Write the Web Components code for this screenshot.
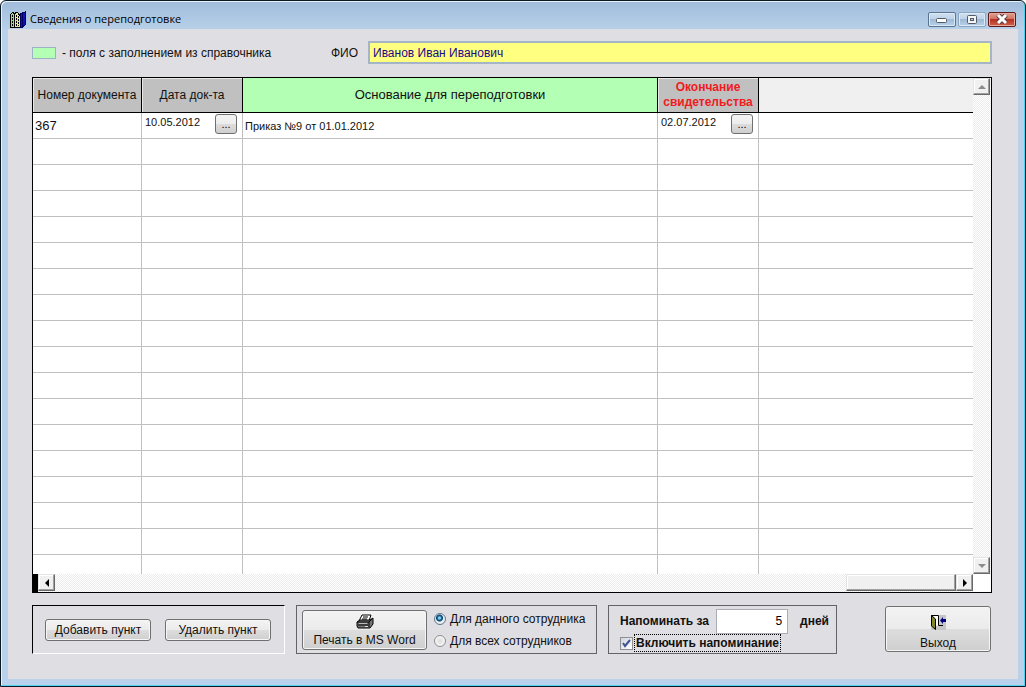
<!DOCTYPE html>
<html lang="ru">
<head>
<meta charset="utf-8">
<title>Сведения о переподготовке</title>
<style>
  body { margin: 0; font-family: "Liberation Sans", Arial, sans-serif; font-size: 12px; line-height: 16px; color: #111; }
</style>
</head>
<body>
<app-window>
  <span slot="title">Сведения о переподготовке</span>
  <employee-header></employee-header>
  <record-grid></record-grid>
  <action-bar></action-bar>
</app-window>

<template id="tpl-window">
  <style>
    :host { display: flex; flex-direction: column; box-sizing: border-box; height: 100vh; min-height: 400px; border: 1px solid #0b1a22; border-radius: 6px 6px 0 0; overflow: hidden; background: linear-gradient(#a0bcdb, #b9d1ea 30px, #b9d1ea); box-shadow: inset -1px -1px #4fd3ef, inset 1px 1px #e8f2fb; padding: 0 7px 7px; }
    header { display: flex; align-items: center; height: 28px; flex: none; padding: 8px 2px 0 1px; box-sizing: border-box; gap: 4px; }
    h1 { margin: 0; flex: 1; font: 11px/16px "Open Sans", "Noto Sans", sans-serif; color: #000; }
    .logo { width: 17px; height: 17px; }
    .controls { display: flex; gap: 2px; }
    .controls button { width: 28px; height: 15px; padding: 0; display: grid; place-items: center; border: 1px solid #5a7591; border-radius: 2px; background: linear-gradient(#cfdff0, #bdd2e8 50%, #9fbad6 50%, #b9d2ea); box-shadow: inset 0 0 0 1px #dce9f5; }
    .controls .min { padding-top: 4px; }
    .controls .max { border-color: #8ba7c4; }
    .controls .close { border-color: #5c1a1a; background: linear-gradient(#e0a090, #cf6f5e 50%, #b53220 50%, #cf6148); box-shadow: inset 0 0 0 1px #e7a99c; }
    main { flex: 1; min-height: 0; display: flex; flex-direction: column; background: #dfdee3; padding: 12px 26px 25px 24px; }
  </style>
  <header>
    <svg class="logo" viewBox="0 0 17 17" shape-rendering="crispEdges">
      <path d="M1 5 2 3 4 1 5 3V16H1Z" fill="#8fe08b" stroke="#000"/>
      <path d="M5 4 7 1 9 2 11 5V16H5Z" fill="#e4e49b" stroke="#000"/>
      <path d="M3 4V15M7 4V15M9 5V15" stroke="#000" stroke-dasharray="2 1"/>
      <path d="M11 3 13 2V16H11ZM13 2 16 1V14L13 16Z" fill="#1212b0" stroke="#000060"/>
    </svg>
    <h1><slot name="title"></slot></h1>
    <div class="controls">
      <button class="min" aria-label="Свернуть"><svg width="12" height="6" viewBox="0 0 12 6"><rect x=".5" y=".5" width="10" height="4" rx="1" fill="#fff" stroke="#535b68"/></svg></button>
      <button class="max" aria-label="Развернуть"><svg width="11" height="9" viewBox="0 0 11 9"><rect x=".5" y=".5" width="9" height="8" rx="1" fill="#f4f4f4" stroke="#535b68"/><rect x="3.500" y="3.500" width="3" height="2" fill="#b9cde2" stroke="#535b68"/></svg></button>
      <button class="close" aria-label="Закрыть"><svg width="12" height="10" viewBox="0 0 12 10"><path d="M2 1 10 9M10 1 2 9" stroke="#5a3b40" stroke-width="5"/><path d="M2 1 10 9M10 1 2 9" stroke="#fff" stroke-width="3"/></svg></button>
    </div>
  </header>
  <main><slot></slot></main>
</template>

<template id="tpl-employee">
  <style>
    :host { display: flex; align-items: center; flex: none; height: 23px; margin-bottom: 13px; }
    .swatch { width: 22px; height: 10px; border: 1px solid #9db2c4; background: #b3ffb3; margin-right: 6px; }
    .note { width: 269px; }
    label { width: 37px; }
    input { flex: 1; min-width: 0; height: 23px; box-sizing: border-box; border: 1px solid #a3b5c6; outline: 1px solid #a3b5c6; outline-offset: -2px; background: #ffff80; color: #1a0a8c; font: inherit; padding: 0 4px; }
  </style>
  <span class="swatch"></span>
  <span class="note">- поля с заполнением из справочника</span>
  <label for="fio">ФИО</label>
  <input id="fio" type="text" value="Иванов Иван Иванович">
</template>

<template id="tpl-grid">
  <style>
    :host { display: grid; grid-template: minmax(0, 1fr) 18px / minmax(0, 1fr) 18px; flex: 1; min-height: 0; border: 1px solid #000; background: #fff; margin-bottom: 12px; }
    .view { overflow: hidden; }
    table { width: 100%; table-layout: fixed; border-collapse: separate; border-spacing: 0; }
    .num { width: 109px; } .date { width: 101px; } .base { width: 415px; }
    th { height: 35px; box-sizing: border-box; padding: 0; font-weight: normal; border-right: 1px solid #000; border-bottom: 1px solid #000; background: #c0c0c0; box-shadow: inset 1px 1px #e8e8e8; white-space: nowrap; }
    th.green { background: #b3ffb3; box-shadow: none; font-size: 13px; }
    th.red { color: #f11a1e; font-weight: bold; line-height: 15px; }
    th.rest { background: #f0f0f0; border-right: 0; box-shadow: none; }
    td { height: 26px; box-sizing: border-box; padding: 0 2px; border-right: 1px solid #c0c0c0; border-bottom: 1px solid #c0c0c0; white-space: nowrap; font-size: 13px; }
    td:last-child { border-right: 0; }
    td.small { font-size: 11px; }
    td.picker { padding: 0; }
    .cell { display: flex; justify-content: space-between; height: 25px; padding: 1px 5px 0 3px; box-sizing: border-box; }
    .cell button { width: 22px; height: 20px; padding: 0; border: 1px solid #707070; border-radius: 3px; background: linear-gradient(#f4f4f4, #ececec 50%, #dddddd 50%, #cfcfcf); font: inherit; }
    .track { background: conic-gradient(#fff 25%, #ececec 0 50%, #fff 0 75%, #ececec 0) 0 0 / 2px 2px; display: flex; justify-content: space-between; }
    .v { flex-direction: column; }
    .track button, .thumb { box-sizing: border-box; padding: 0; border: 1px solid; border-color: #e3e3e3 #696969 #696969 #e3e3e3; box-shadow: inset -1px -1px #a0a0a0, inset 1px 1px #fff; background: #f0f0f0; display: grid; place-items: center; width: 17px; height: 17px; }
    .h .split { width: 5px; background: #000; }
    .h .thumb { width: 110px; margin-left: auto; }
  </style>
  <div class="view">
    <table>
      <colgroup><col class="num"><col class="date"><col class="base"><col class="date"><col></colgroup>
      <thead><tr><th>Номер документа</th><th>Дата док-та</th><th class="green">Основание для переподготовки</th><th class="red">Окончание<br>свидетельства</th><th class="rest"></th></tr></thead>
      <tbody>
        <tr><td>367</td><td class="picker small"><div class="cell"><span>10.05.2012</span><button aria-label="Выбрать дату документа">...</button></div></td><td class="small">Приказ №9 от 01.01.2012</td><td class="picker small"><div class="cell"><span>02.07.2012</span><button aria-label="Выбрать дату окончания">...</button></div></td><td></td></tr>
      </tbody>
    </table>
  </div>
  <div class="track v">
    <button aria-label="Вверх"><svg width="8" height="4"><path d="M0 4 4 0 8 4Z" fill="#8c8c8c"/></svg></button>
    <button aria-label="Вниз"><svg width="8" height="4"><path d="M0 0H8L4 4Z" fill="#8c8c8c"/></svg></button>
  </div>
  <div class="track h">
    <span class="split"></span>
    <button aria-label="Влево"><svg width="4" height="8"><path d="M4 0V8L0 4Z" fill="#000"/></svg></button>
    <span class="thumb"></span>
    <button aria-label="Вправо"><svg width="4" height="8"><path d="M0 0V8L4 4Z" fill="#000"/></svg></button>
  </div>
</template>

<template id="tpl-button">
  <style>
    :host { display: block; flex: none; width: 106px; height: 22px; }
    :host([size="print"]) { width: 125px; height: 40px; }
    :host([size="exit"]) { width: 106px; height: 46px; }
    button { width: 100%; height: 100%; box-sizing: border-box; padding: 0; display: flex; flex-direction: column; align-items: center; justify-content: center; gap: 3px; border: 1px solid #707070; border-radius: 3px; background: linear-gradient(#f3f3f3, #ebebeb 50%, #dddddd 50%, #cfcfcf); box-shadow: inset 0 0 0 1px #f6f6f6; font: inherit; color: inherit; white-space: nowrap; }
    :host([size="print"]) button { padding-top: 2px; }
    :host([size="exit"]) button { gap: 5px; padding-top: 8px; }
    ::slotted(svg) { display: block; }
  </style>
  <button><slot name="icon"></slot><span><slot></slot></span></button>
</template>

<template id="tpl-panel">
  <style>
    :host { display: flex; align-items: center; box-sizing: border-box; flex: none; height: 49px; border: 1px solid #646468; }
    :host([sunken]) { border-color: #000 #fff #fff #000; }
  </style>
  <slot></slot>
</template>

<template id="tpl-actions">
  <style>
    :host { display: flex; flex: none; gap: 11px; align-items: flex-start; }
    .edit { width: 253px; gap: 14px; padding: 0 12px; }
    .print { width: 301px; padding: 0 5px; gap: 7px; }
    .radios { display: grid; gap: 6px; }
    .radios label { display: flex; align-items: center; gap: 4px; white-space: nowrap; }
    input[type=radio] { appearance: none; margin: 0; width: 12px; height: 12px; border: 1px solid #8e8f8f; border-radius: 50%; box-sizing: border-box; background: radial-gradient(#dcdcdc, #f6f6f6 70%); }
    input[type=radio]:checked { border-color: #5c7689; background: radial-gradient(circle at 45% 40%, #7fd4f4 0 1px, #1b6c9f 2px, #0b3f66 3px, #e8eef2 4px); }
    .remind { width: 229px; font-weight: bold; padding: 0 7px 0 11px; }
    .stack { display: grid; flex: 1; padding-top: 2px; }
    .line { display: flex; align-items: center; height: 25px; }
    .line label { flex: 1; }
    .days { width: 72px; height: 25px; box-sizing: border-box; border: 1px solid #aaadb3; background: #fff; font: 12px "Liberation Sans", Arial, sans-serif; text-align: right; padding: 0 5px; margin-right: 12px; }
    .check { display: flex; align-items: center; height: 19px; gap: 1px; }
    .check label { border: 1px dotted #000; height: 18px; box-sizing: border-box; padding: 0 1px; line-height: 16px; }
    .check input { appearance: none; margin: 0; width: 13px; height: 13px; border: 1px solid #8e8f8f; box-sizing: border-box; background: linear-gradient(135deg, #cdd5e0, #fff); }
    .box { display: grid; place-items: center; }
    .box > * { grid-area: 1 / 1; }
    .box svg { pointer-events: none; }
    .exit { margin: 1px 1px 0 auto; }
  </style>
  <group-panel class="edit" sunken>
    <push-button>Добавить пункт</push-button>
    <push-button>Удалить пункт</push-button>
  </group-panel>
  <group-panel class="print">
    <push-button size="print">
      <svg slot="icon" width="18" height="15" viewBox="0 0 18 15">
        <path d="M6 1H15L13 7H3Z" fill="#fff" stroke="#000"/>
        <path d="M7 3H12M6 5H11" stroke="#000"/>
        <path d="M1 8 4 6H14L17 4V10L14 14H2L1 12Z" fill="#777" stroke="#000"/>
        <path d="M1 8H13L16 5M13 8V13M2 11H12" fill="none" stroke="#000"/>
        <path d="M3 9.500H11" stroke="#bbb"/><path d="M9 12.500H12" stroke="#ddd"/>
      </svg>Печать в MS Word</push-button>
    <div class="radios">
      <label><input type="radio" name="scope" checked>Для данного сотрудника</label>
      <label><input type="radio" name="scope">Для всех сотрудников</label>
    </div>
  </group-panel>
  <group-panel class="remind">
    <div class="stack">
      <div class="line"><label for="days">Напоминать за</label><input class="days" id="days" type="text" value="5"><span>дней</span></div>
      <div class="check"><span class="box"><input id="on" type="checkbox" checked><svg width="13" height="13"><path d="M3 6 5 9 10 3" fill="none" stroke="#40538f" stroke-width="2"/></svg></span><label for="on">Включить напоминание</label></div>
    </div>
  </group-panel>
  <push-button class="exit" size="exit">
    <svg slot="icon" width="17" height="15" viewBox="0 0 17 15">
      <rect x="1" width="15" height="15" fill="#c6c6c6"/>
      <path d="M1.500 11V.5H8.500V10.500H13" fill="#fff" stroke="#000"/>
      <path d="M1.500.5 5.500 4V14.500L1.500 11Z" fill="#84842a" stroke="#000"/>
      <path d="M10 5.500 13 2V4H16V7H13V9Z" fill="#00007c"/>
    </svg>Выход</push-button>
</template>

<script>
  function define(name, templateId, setup) {
    customElements.define(name, class extends HTMLElement {
      constructor() {
        super();
        const root = this.attachShadow({ mode: "open" });
        root.append(document.getElementById(templateId).content.cloneNode(true));
        if (setup) setup(root);
      }
    });
  }
  define("push-button", "tpl-button");
  define("group-panel", "tpl-panel");
  define("employee-header", "tpl-employee");
  define("record-grid", "tpl-grid", root => {
    const body = root.querySelector("tbody");
    for (let i = 0; i < 40; i++) {
      const row = body.insertRow();
      for (let c = 0; c < 5; c++) row.insertCell();
    }
  });
  define("action-bar", "tpl-actions");
  define("app-window", "tpl-window");
</script>
</body>
</html>
